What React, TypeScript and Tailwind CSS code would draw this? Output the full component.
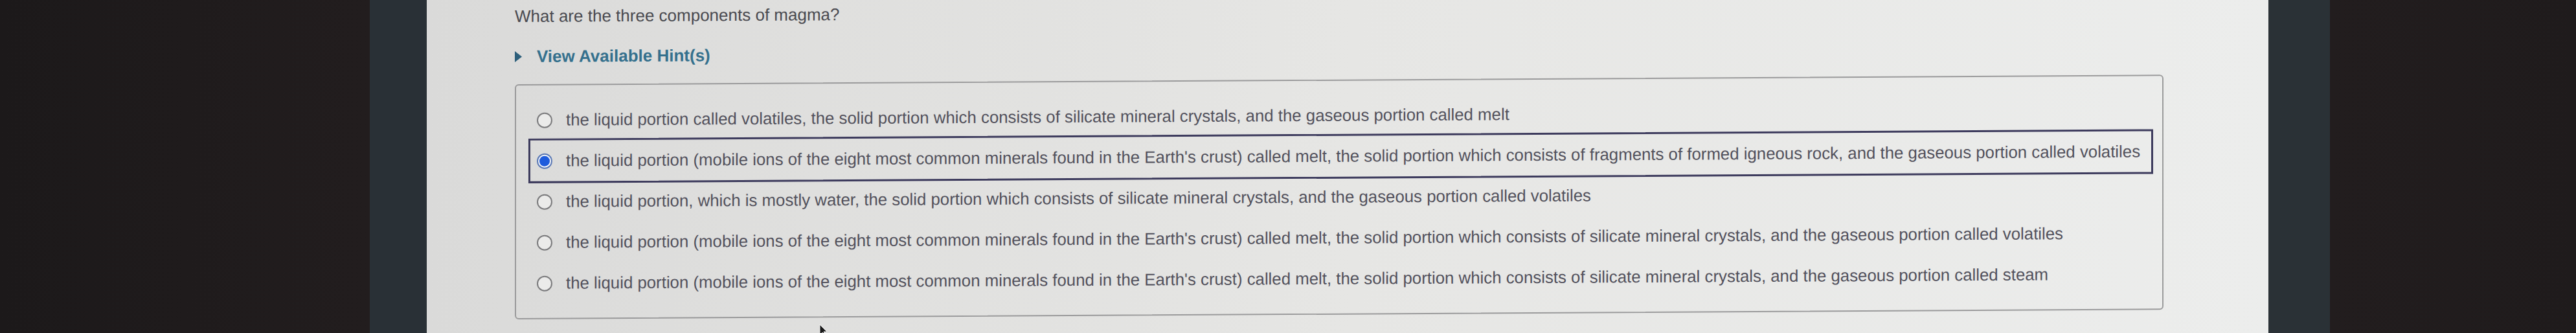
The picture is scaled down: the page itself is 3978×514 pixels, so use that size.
const options = [
  "the liquid portion called volatiles, the solid portion which consists of silicate mineral crystals, and the gaseous portion called melt",
  "the liquid portion (mobile ions of the eight most common minerals found in the Earth's crust) called melt, the solid portion which consists of fragments of formed igneous rock, and the gaseous portion called volatiles",
  "the liquid portion, which is mostly water, the solid portion which consists of silicate mineral crystals, and the gaseous portion called volatiles",
  "the liquid portion (mobile ions of the eight most common minerals found in the Earth's crust) called melt, the solid portion which consists of silicate mineral crystals, and the gaseous portion called volatiles",
  "the liquid portion (mobile ions of the eight most common minerals found in the Earth's crust) called melt, the solid portion which consists of silicate mineral crystals, and the gaseous portion called steam",
];

function Radio({ checked }: { checked: boolean }) {
  if (checked) {
    return (
      <span className="flex h-[24px] w-[24px] shrink-0 rounded-full border-2 border-[#5a78b4] bg-[#f3f5fa] p-[2px]">
        <span className="h-full w-full rounded-full bg-[#1e5bdc]" />
      </span>
    );
  }
  return <span className="h-[24px] w-[24px] shrink-0 rounded-full border-2 border-[#7a7a7c] bg-[#ebebea]" />;
}

export default function App() {
  const selected = 1;

  return (
    <div className="flex h-[514px] w-[3978px] overflow-hidden font-['Liberation_Sans',Arial,sans-serif]">
      <div className="w-[571px] bg-gradient-to-r from-[#1c191a] to-[#221d1e]" />
      <div className="w-[88px] bg-[#293036]" />

      <main className="relative w-[2844px] bg-gradient-to-r from-[#dadad9] via-[#e6e6e4] to-[#ecedec] pl-[136px] pt-[10px]">
        <div className="w-[2546px] origin-left -skew-y-[0.33deg]">
          <h2 className="text-[26px] leading-[30px] text-[#4a4a50]">What are the three components of magma?</h2>

          <button className="mt-[32px] flex items-center gap-[23px] text-[26px] font-bold leading-[30px] text-[#34708d]">
            <svg width="11" height="17" viewBox="0 0 11 17">
              <polygon points="0,0 11,8.5 0,17" fill="#2d5f7b" />
            </svg>
            View Available Hint(s)
          </button>

          <div className="mt-[28px] rounded-[6px] border-2 border-[#9b9b9c] p-[22px]">
            {options.map((text, i) => (
              <div key={i} className="flex h-[63px]">
                <label
                  className={
                    "flex h-full items-center gap-[21px] pl-[10px] pr-[17px] text-[25.8px] text-[#52515c] " +
                    (i === selected ? "outline-[3px] outline-[#3d3b5d] outline-solid" : "")
                  }
                >
                  <Radio checked={i === selected} />
                  <span className="whitespace-nowrap">{text}</span>
                </label>
              </div>
            ))}
          </div>
        </div>

        <svg className="absolute left-[606px] top-[500px]" width="14" height="20" viewBox="0 0 14 20">
          <polygon points="1,1 1,17 5,13 8,19 10,18 7,12 12,12" fill="#1a1a1a" stroke="#f0f0f0" strokeWidth="1" />
        </svg>
      </main>

      <div className="w-[95px] bg-[#2a3136]" />
      <div className="flex-1 bg-gradient-to-r from-[#221d1e] to-[#1f1b1c]" />
    </div>
  );
}
